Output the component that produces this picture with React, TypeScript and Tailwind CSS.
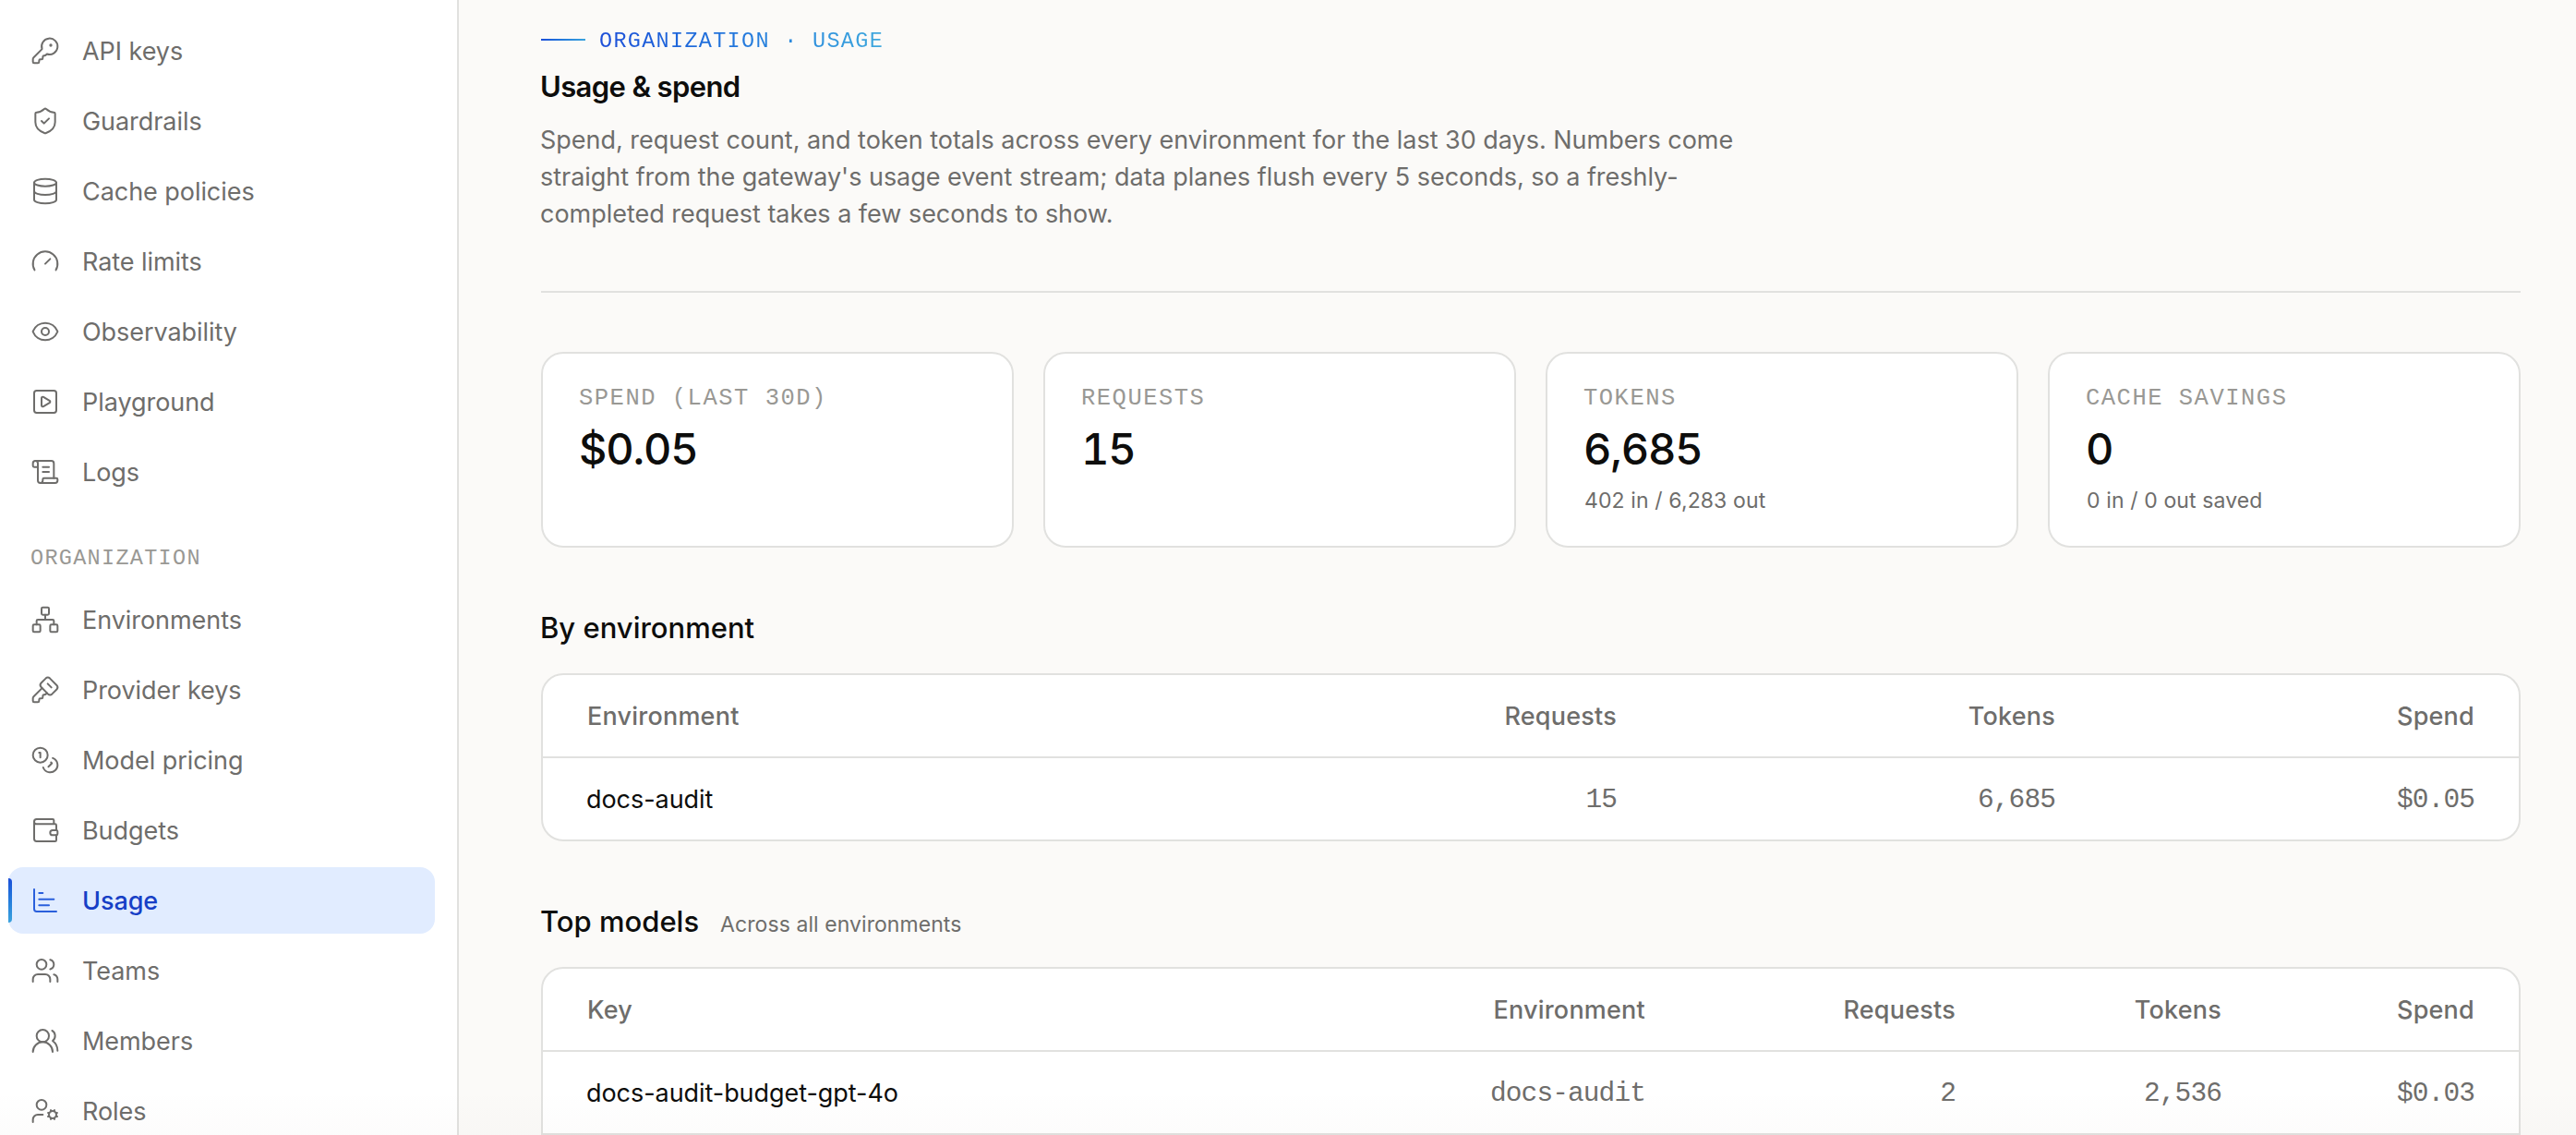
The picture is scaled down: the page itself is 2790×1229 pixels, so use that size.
import {
  ChartBar,
  Coins,
  Database,
  Eye,
  Gauge,
  KeyRound,
  KeySquare,
  Network,
  ScrollText,
  ShieldCheck,
  SquarePlay,
  UserCog,
  Users,
  UsersRound,
  Wallet,
  type LucideIcon,
} from "lucide-react";

type NavItem = { label: string; icon: LucideIcon; active?: boolean };

const workspaceNav: NavItem[] = [
  { label: "API keys", icon: KeyRound },
  { label: "Guardrails", icon: ShieldCheck },
  { label: "Cache policies", icon: Database },
  { label: "Rate limits", icon: Gauge },
  { label: "Observability", icon: Eye },
  { label: "Playground", icon: SquarePlay },
  { label: "Logs", icon: ScrollText },
];

const organizationNav: NavItem[] = [
  { label: "Environments", icon: Network },
  { label: "Provider keys", icon: KeySquare },
  { label: "Model pricing", icon: Coins },
  { label: "Budgets", icon: Wallet },
  { label: "Usage", icon: ChartBar, active: true },
  { label: "Teams", icon: Users },
  { label: "Members", icon: UsersRound },
  { label: "Roles", icon: UserCog },
];

const stats = [
  { label: "Spend (last 30d)", value: "$0.05" },
  { label: "Requests", value: "15" },
  { label: "Tokens", value: "6,685", note: "402 in / 6,283 out" },
  { label: "Cache savings", value: "0", note: "0 in / 0 out saved" },
];

const mono = "font-['Liberation_Mono',monospace]";

function NavLink({ label, icon: Icon, active }: NavItem) {
  return (
    <a
      className={
        active
          ? "relative flex h-[72px] items-center gap-6 rounded-2xl bg-[#e1ecff] px-6 font-medium text-[#173fc6]"
          : "relative flex h-[72px] items-center gap-6 px-6 text-[#6e6d6b]"
      }
    >
      {active && (
        <span className="absolute top-3 bottom-3 left-0 w-1 rounded-r-sm bg-linear-to-b from-[#1d4ed8] to-[#3ba3dd]" />
      )}
      <Icon className={active ? "size-8 text-[#2a5fdc]" : "size-8"} strokeWidth={1.5} />
      <span className="pt-0.5 text-[27px] leading-10 tracking-[-0.002em]">{label}</span>
    </a>
  );
}

function Table({
  columns,
  headers,
  rows,
  continues,
}: {
  columns: string;
  headers: string[];
  rows: string[][];
  continues?: boolean;
}) {
  return (
    <div
      className={`overflow-hidden border-2 border-[#e1e1df] bg-white ${continues ? "rounded-t-3xl" : "rounded-3xl"}`}
    >
      <div className={`grid h-[88px] items-center ${columns}`}>
        {headers.map((header) => (
          <div
            key={header}
            className="pt-0.5 pr-12 text-right text-[27px] font-medium tracking-[0.008em] text-[#6e6d6b] first:pr-0 first:pl-12 first:text-left"
          >
            {header}
          </div>
        ))}
      </div>
      {rows.map((row) => (
        <div key={row[0]} className={`grid h-[90px] items-center border-t-2 border-[#e1e1df] ${columns}`}>
          {row.map((cell, i) => (
            <div
              key={i}
              className={
                i === 0
                  ? "pt-0.5 pl-[47px] text-[27px] tracking-[-0.002em] text-[#0d0d0c]"
                  : `pt-[3px] pr-12 text-right text-[29.5px] tracking-[-0.9px] text-[#6e6d6b] ${mono}`
              }
            >
              {cell}
            </div>
          ))}
        </div>
      ))}
    </div>
  );
}

export default function App() {
  return (
    <div className="relative flex h-[1229px] w-[2790px] overflow-hidden bg-[#fbfaf8] font-['Inter',sans-serif] text-[#0d0d0c]">
      <aside className="w-[497px] shrink-0 border-r-2 border-[#e1e1df] bg-white pt-[19px] pr-6 pl-[9px]">
        <nav className="flex flex-col gap-1">
          {workspaceNav.map((item) => (
            <NavLink key={item.label} {...item} />
          ))}
        </nav>
        <div className={`mt-[42px] mb-[14px] px-6 text-[23.5px] leading-8 tracking-[1.3px] text-[#999894] uppercase ${mono}`}>
          Organization
        </div>
        <nav className="flex flex-col gap-1">
          {organizationNav.map((item) => (
            <NavLink key={item.label} {...item} />
          ))}
        </nav>
      </aside>

      <main className="flex-1 pt-[27px] pr-[60px] pl-[89px]">
        <header className="border-b-2 border-[#e1e1df] pb-[63px]">
          <div className="flex h-8 items-center gap-[15px]">
            <span className="h-0.5 w-12 bg-linear-to-r from-[#1d4ed8] to-[#3ba3dd]" />
            <span
              className={`bg-linear-to-r from-[#1d4ed8] via-[#2378dc] to-[#3fa8dd] bg-clip-text pt-[3px] text-[23.5px] leading-8 tracking-[1.3px] text-transparent uppercase ${mono}`}
            >
              Organization · Usage
            </span>
          </div>
          <h1 className="-ml-px mt-3 text-[31px] leading-[46px] font-semibold tracking-[-0.02em]">Usage &amp; spend</h1>
          <p className="-ml-px mt-[15px] text-[27px] leading-10 tracking-[-0.001em] whitespace-nowrap text-[#6e6d6b]">
            Spend, request count, and token totals across every environment for the last 30 days. Numbers come
            <br />
            straight from the gateway's usage event stream; data planes flush every 5 seconds, so a freshly-
            <br />
            completed request takes a few seconds to show.
          </p>
        </header>

        <section className="mt-16 grid grid-cols-4 gap-8">
          {stats.map((stat) => (
            <div key={stat.label} className="h-[212px] rounded-3xl border-2 border-[#e1e1df] bg-white px-10 pt-[33px]">
              <div className={`-ml-px text-[25.5px] leading-8 tracking-[1.5px] text-[#999894] uppercase ${mono}`}>
                {stat.label}
              </div>
              <div className="-ml-px mt-1.5 text-[47px] leading-[64px] font-medium tracking-[-0.025em] tabular-nums">
                {stat.value}
              </div>
              {stat.note && (
                <div className="mt-2 text-[23px] leading-8 tracking-[0.005em] text-[#6e6d6b]">{stat.note}</div>
              )}
            </div>
          ))}
        </section>

        <section className="mt-[63px]">
          <h2 className="-ml-px text-[31px] leading-[48px] font-medium">By environment</h2>
          <div className="mt-[25px]">
            <Table
              columns="grid-cols-[735px_476px_475px_454px]"
              headers={["Environment", "Requests", "Tokens", "Spend"]}
              rows={[["docs-audit", "15", "6,685", "$0.05"]]}
            />
          </div>
        </section>

        <section className="mt-[63px]">
          <div className="-ml-px flex items-baseline gap-[23px]">
            <h2 className="text-[31px] leading-[48px] font-medium">Top models</h2>
            <span className="text-[23px] tracking-[0.003em] text-[#6e6d6b]">Across all environments</span>
          </div>
          <div className="mt-[25px]">
            <Table
              columns="grid-cols-[900px_342px_336px_288px_274px]"
              headers={["Key", "Environment", "Requests", "Tokens", "Spend"]}
              rows={[["docs-audit-budget-gpt-4o", "docs-audit", "2", "2,536", "$0.03"]]}
              continues
            />
          </div>
        </section>
      </main>

      <div className="pointer-events-none absolute right-0 bottom-0 left-0 h-12 bg-linear-to-t from-[#3c2814]/[0.015] to-transparent" />
    </div>
  );
}
